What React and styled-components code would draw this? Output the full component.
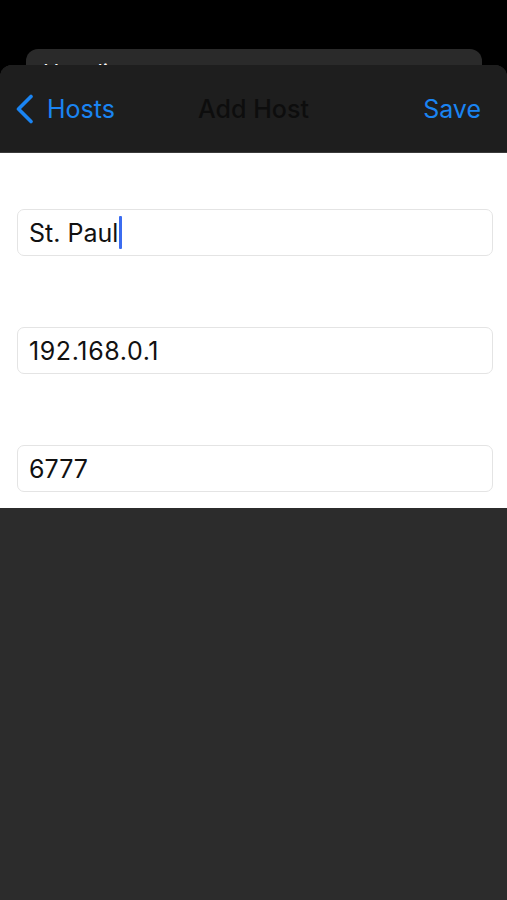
import React from 'react';
import styled, { createGlobalStyle } from 'styled-components';

const Global = createGlobalStyle`
  html, body {
    margin: 0;
    padding: 0;
    background: #000;
  }
  body {
    font-family: Inter, "Liberation Sans", Arial, sans-serif;
  }
`;

const Screen = styled.div`
  width: 507px;
  height: 900px;
  background: #000;
  overflow: hidden;
  display: flex;
  flex-direction: column;
  padding-top: 49px;
  box-sizing: border-box;
`;

const BackCard = styled.div`
  margin: 0 25px 0 26px;
  height: 30px;
  background: #2a2a2a;
  border-radius: 12px 12px 0 0;
  padding: 10px 17px 0;
  box-sizing: border-box;
  overflow: hidden;
  color: #fff;
  font-size: 22px;
  line-height: 26px;
`;

const Sheet = styled.div`
  position: relative;
  margin-top: -14px;
  flex: 1;
  display: flex;
  flex-direction: column;
  background: #2c2c2c;
  border-radius: 12px 12px 0 0;
  overflow: hidden;
`;

const NavBar = styled.div`
  height: 88px;
  background: #1e1e1e;
  display: grid;
  grid-template-columns: 1fr auto 1fr;
  align-items: center;
  padding: 0 15px;
  border-bottom: 1px solid #3a3a3a;
  box-sizing: border-box;
`;

const NavButton = styled.div`
  display: flex;
  align-items: center;
  gap: 13px;
  color: #1a84f2;
  font-size: 25px;
  justify-self: ${p => (p.$end ? 'end' : 'start')};
  margin-right: ${p => (p.$end ? '11px' : '0')};
`;

const Title = styled.div`
  color: #0d0d0d;
  font-size: 25px;
  font-weight: 500;
`;

const Form = styled.div`
  background: #fff;
  display: flex;
  flex-direction: column;
  gap: 71px;
  padding: 56px 14px 16px 17px;
`;

const Field = styled.div`
  height: 47px;
  border: 1px solid #e4e4e4;
  border-radius: 7px;
  display: flex;
  align-items: center;
  padding: 0 11px;
  box-sizing: border-box;
  font-size: 25px;
  letter-spacing: ${p => (p.$numeric ? '0.6px' : '0')};
  color: #111;
`;

const Caret = styled.span`
  display: inline-block;
  width: 3px;
  height: 33px;
  margin-left: 1px;
  background: #3b6cf0;
  border-radius: 1px;
`;

const Chevron = () => (
  <svg width="19" height="30" viewBox="0 0 19 30" fill="none">
    <path d="M16 2.5 L3.5 15 L16 27.5" stroke="#1a84f2" strokeWidth="3.6" strokeLinecap="round" strokeLinejoin="round" />
  </svg>
);

const fields = [
  { id: 'name', value: 'St. Paul', active: true },
  { id: 'address', value: '192.168.0.1', numeric: true },
  { id: 'port', value: '6777' },
];

export default function App() {
  return (
    <>
      <Global />
      <Screen>
        <BackCard>Host list</BackCard>
        <Sheet>
          <NavBar>
            <NavButton>
              <Chevron />
              Hosts
            </NavButton>
            <Title>Add Host</Title>
            <NavButton $end>Save</NavButton>
          </NavBar>
          <Form>
            {fields.map(f => (
              <Field key={f.id} $numeric={f.numeric}>
                {f.value}
                {f.active && <Caret />}
              </Field>
            ))}
          </Form>
        </Sheet>
      </Screen>
    </>
  );
}
